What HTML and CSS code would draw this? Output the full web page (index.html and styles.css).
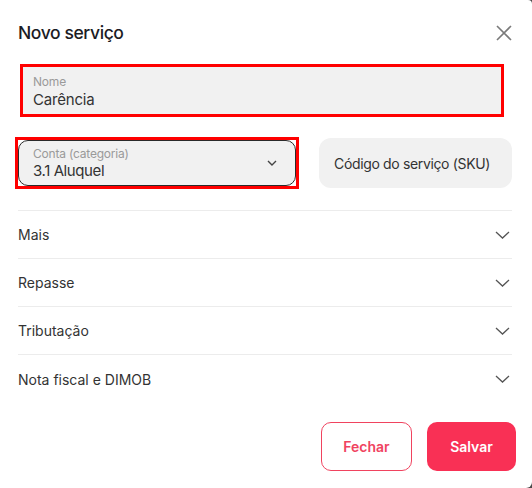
FILE: index.html
```html
<!DOCTYPE html>
<html lang="pt">
<head>
<meta charset="utf-8">
<link rel="stylesheet" href="styles.css">
</head>
<body>
<div class="modal">
  <div class="header">
    <h1 class="title">Novo serviço</h1>
    <button class="close" aria-label="Fechar">
      <svg width="16" height="16" viewBox="0 0 16 16"><path d="M1 1 L15 15 M15 1 L1 15" stroke="#7a7a7a" stroke-width="1.6" fill="none"/></svg>
    </button>
  </div>
  <div class="name-field">
    <span class="label">Nome</span>
    <span class="value">Carência</span>
  </div>
  <div class="row2">
    <div class="select-wrap">
      <div class="select">
        <div class="select-text">
          <span class="label">Conta (categoria)</span>
          <span class="value">3.1 Aluquel</span>
        </div>
        <svg class="sel-chev" width="10" height="6" viewBox="0 0 10 6"><path d="M1 1 L5 5 L9 1" stroke="#444" stroke-width="1.4" fill="none"/></svg>
      </div>
    </div>
    <div class="sku">Código do serviço (SKU)</div>
  </div>
  <div class="sections">
    <div class="section"><span>Mais</span><svg width="15" height="8" viewBox="0 0 15 8"><path d="M1 1 L7.5 7 L14 1" stroke="#555" stroke-width="1.3" fill="none"/></svg></div>
    <div class="section"><span>Repasse</span><svg width="15" height="8" viewBox="0 0 15 8"><path d="M1 1 L7.5 7 L14 1" stroke="#555" stroke-width="1.3" fill="none"/></svg></div>
    <div class="section"><span>Tributação</span><svg width="15" height="8" viewBox="0 0 15 8"><path d="M1 1 L7.5 7 L14 1" stroke="#555" stroke-width="1.3" fill="none"/></svg></div>
    <div class="section last"><span>Nota fiscal e DIMOB</span><svg width="15" height="8" viewBox="0 0 15 8"><path d="M1 1 L7.5 7 L14 1" stroke="#555" stroke-width="1.3" fill="none"/></svg></div>
  </div>
  <div class="actions">
    <button class="btn outline">Fechar</button>
    <button class="btn solid">Salvar</button>
  </div>
</div>
</body>
</html>
```
FILE: styles.css
```css
* { box-sizing: border-box; }
html, body { margin: 0; padding: 0; }
body {
  width: 532px;
  height: 488px;
  background: #4a4a4a;
  font-family: Inter, "Noto Sans", sans-serif;
  color: #2b2b2b;
}
.modal {
  width: 532px;
  height: 488px;
  background: #fff;
  border-radius: 0 4px 6px 0;
  padding: 0 20px 0 18px;
}
.header {
  display: flex;
  align-items: center;
  justify-content: space-between;
  height: 64px;
  padding-top: 1px;
}
.title {
  margin: 0;
  font-size: 17.5px;
  font-weight: 500;
  color: #1b1b24;
  letter-spacing: -0.4px;
}
.close {
  border: 0;
  background: none;
  padding: 0;
  display: flex;
}
.name-field {
  margin-left: 2px;
  width: 484px;
  height: 53px;
  border: 3px solid #ff0000;
  background: #f1f1f1;
  display: flex;
  flex-direction: column;
  padding: 8px 0 0 10px;
}
.label {
  font-size: 12px;
  color: #9a9a9a;
  line-height: 14px;
  letter-spacing: -0.2px;
}
.value {
  font-size: 15px;
  color: #333;
  line-height: 20px;
  margin-top: 1px;
  letter-spacing: -0.2px;
}
.row2 {
  display: flex;
  align-items: center;
  gap: 20px;
  margin-top: 20px;
  margin-left: -3px;
}
.select-wrap {
  width: 284px;
  height: 52px;
  border: 3px solid #ff0000;
  display: flex;
}
.select {
  flex: 1;
  background: #f1f1f1;
  border: 1px solid #2a2a2a;
  border-radius: 10px;
  display: flex;
  align-items: center;
  justify-content: space-between;
  padding: 0 18px 0 14px;
}
.select-text {
  display: flex;
  flex-direction: column;
  padding-top: 2px;
}
.select-text .value { margin-top: 0; letter-spacing: -0.4px; }
.sku {
  width: 193px;
  height: 50px;
  background: #f1f1f1;
  border-radius: 12px;
  display: flex;
  align-items: center;
  padding-left: 15px;
  font-size: 14px;
  letter-spacing: -0.35px;
  color: #333;
}
.sections {
  margin-top: 21px;
  border-top: 1px solid #ececec;
}
.section {
  height: 48px;
  border-bottom: 1px solid #ececec;
  display: flex;
  align-items: center;
  justify-content: space-between;
  font-size: 14px;
  color: #333;
  padding-right: 2px;
}
.section.last { border-bottom: 0; }
.actions {
  display: flex;
  justify-content: flex-end;
  gap: 15px;
  margin-top: 19px;
  margin-right: -4px;
}
.btn {
  height: 49px;
  border-radius: 10px;
  font-family: Inter, "Noto Sans", sans-serif;
  font-size: 14px;
  font-weight: 600;
}
.outline {
  width: 91px;
  background: #fff;
  border: 1px solid #f0435f;
  color: #f0435f;
}
.solid {
  width: 89px;
  background: #f93055;
  border: 0;
  color: #fff;
}
```
